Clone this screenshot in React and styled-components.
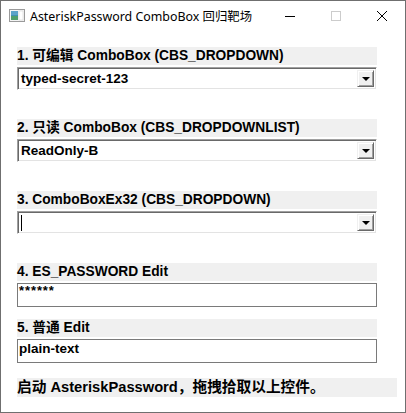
import styled, { createGlobalStyle } from 'styled-components';

const GlobalStyle = createGlobalStyle`
  html, body {
    margin: 0;
    padding: 0;
    background: #ffffff;
  }
`;

const sans = `"Liberation Sans", "Noto Sans CJK SC", sans-serif`;

const Window = styled.div`
  box-sizing: border-box;
  width: 406px;
  height: 413px;
  border: 1px solid #6f6f6f;
  background: #ffffff;
  display: flex;
  flex-direction: column;
`;

const TitleBar = styled.div`
  height: 30px;
  display: flex;
  align-items: center;
  font-family: "Noto Sans", "Noto Sans CJK SC", sans-serif;
  font-size: 12.4px;
  color: #000;
`;

const AppIcon = styled.svg`
  width: 16px;
  height: 13px;
  margin: 0 5px 1px 8px;
  flex-shrink: 0;
`;

const Title = styled.span`
  flex: 1;
  white-space: nowrap;
  margin-top: -1px;
`;

const CaptionButton = styled.div`
  width: 46px;
  height: 30px;
  display: flex;
  align-items: center;
  justify-content: center;
`;

const Client = styled.div`
  display: flex;
  flex-direction: column;
  padding: 16px 0 0 16px;
`;

const Label = styled.div`
  box-sizing: border-box;
  width: ${({ $wide }) => ($wide ? '380px' : '360px')};
  height: ${({ $tall }) => ($tall ? '19px' : '18px')};
  background: #f0f0f0;
  font-family: ${sans};
  font-weight: bold;
  font-size: ${({ $wide }) => ($wide ? '14.7px' : '13.75px')};
  line-height: 18px;
  color: #000;
  white-space: nowrap;
  margin-bottom: 2px;
`;

const Field = styled.div`
  margin-bottom: ${({ $gap }) => $gap}px;
`;

const Combo = styled.div`
  box-sizing: border-box;
  width: 360px;
  height: 23px;
  border-top: 1px solid #a0a0a0;
  border-left: 1px solid #a0a0a0;
  border-bottom: 1px solid #ffffff;
  border-right: 1px solid #ffffff;
  box-shadow: inset 1px 1px 0 #696969, inset -1px -1px 0 #e3e3e3;
  display: flex;
  align-items: stretch;
  padding: 2px;
  background: #fff;
`;

const ComboText = styled.div`
  flex: 1;
  font-family: ${sans};
  font-weight: bold;
  font-size: 13.5px;
  line-height: 17px;
  padding-left: 1px;
  color: #000;
  white-space: nowrap;
  display: flex;
  align-items: center;
`;

const Caret = styled.span`
  display: inline-block;
  width: 1px;
  height: 16px;
  background: #000;
`;

const DropButton = styled.div`
  box-sizing: border-box;
  width: 17px;
  background: #f0f0f0;
  border-top: 1px solid #f0f0f0;
  border-left: 1px solid #f0f0f0;
  border-bottom: 1px solid #696969;
  border-right: 1px solid #696969;
  box-shadow: inset 1px 1px 0 #ffffff, inset -1px -1px 0 #a0a0a0;
  display: flex;
  align-items: center;
  justify-content: center;
`;

const Arrow = styled.span`
  width: 0;
  height: 0;
  border-left: 4px solid transparent;
  border-right: 4px solid transparent;
  border-top: 4px solid #000;
  margin-top: 1px;
`;

const Edit = styled.div`
  box-sizing: border-box;
  width: 360px;
  height: 24px;
  border: 1px solid #7a7a7a;
  font-family: ${sans};
  font-weight: bold;
  font-size: 13.5px;
  line-height: 18px;
  padding-left: 1px;
  color: #000;
  white-space: nowrap;
`;

const Stars = styled.span`
  font-size: 13px;
  letter-spacing: 0.9px;
  line-height: 14px;
  vertical-align: top;
`;

const ComboBox = ({ value, caret }) => (
  <Combo>
    <ComboText>{caret ? <Caret /> : value}</ComboText>
    <DropButton>
      <Arrow />
    </DropButton>
  </Combo>
);

export default function App() {
  return (
    <>
      <GlobalStyle />
      <Window>
        <TitleBar>
          <AppIcon viewBox="0 0 16 13">
            <rect x="0.5" y="0.5" width="15" height="12" fill="#f4f4f4" stroke="#9a9a9a" />
            <rect x="2" y="2" width="7" height="9" fill="#3f8fb0" />
            <rect x="2" y="2" width="7" height="4" fill="#5aa2c8" />
            <rect x="2" y="7" width="7" height="4" fill="#4f9e6a" />
            <rect x="10" y="2" width="4" height="9" fill="#ffffff" stroke="#cfcfcf" strokeWidth="0.5" />
          </AppIcon>
          <Title>AsteriskPassword ComboBox 回归靶场</Title>
          <CaptionButton>
            <svg width="10" height="10" viewBox="0 0 10 10">
              <path d="M0 5.5 H10" stroke="#000" strokeWidth="1" />
            </svg>
          </CaptionButton>
          <CaptionButton>
            <svg width="10" height="10" viewBox="0 0 10 10">
              <rect x="0.5" y="0.5" width="9" height="9" fill="none" stroke="#cccccc" />
            </svg>
          </CaptionButton>
          <CaptionButton>
            <svg width="10" height="10" viewBox="0 0 10 10">
              <path d="M0 0 L10 10 M10 0 L0 10" stroke="#000" strokeWidth="1" />
            </svg>
          </CaptionButton>
        </TitleBar>

        <Client>
          <Field $gap={29}>
            <Label>1. 可编辑 ComboBox (CBS_DROPDOWN)</Label>
            <ComboBox value="typed-secret-123" />
          </Field>
          <Field $gap={29}>
            <Label>2. 只读 ComboBox (CBS_DROPDOWNLIST)</Label>
            <ComboBox value="ReadOnly-B" />
          </Field>
          <Field $gap={29}>
            <Label>3. ComboBoxEx32 (CBS_DROPDOWN)</Label>
            <ComboBox caret />
          </Field>
          <Field $gap={12}>
            <Label>4. ES_PASSWORD Edit</Label>
            <Edit>
              <Stars>******</Stars>
            </Edit>
          </Field>
          <Field $gap={15}>
            <Label>5. 普通 Edit</Label>
            <Edit>plain-text</Edit>
          </Field>
          <Label $wide $tall>启动 AsteriskPassword，拖拽拾取以上控件。</Label>
        </Client>
      </Window>
    </>
  );
}
